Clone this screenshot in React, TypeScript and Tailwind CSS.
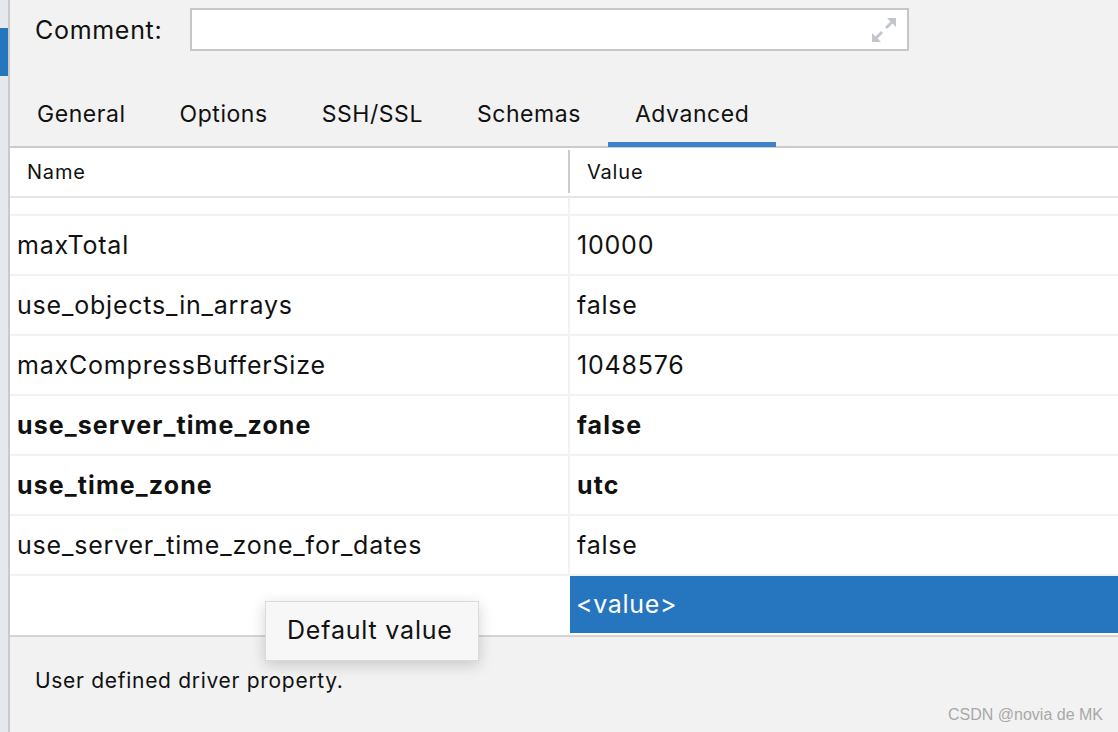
import React from "react";

const tabs = ["General", "Options", "SSH/SSL", "Schemas", "Advanced"];

const rows = [
  { name: "maxTotal", value: "10000" },
  { name: "use_objects_in_arrays", value: "false" },
  { name: "maxCompressBufferSize", value: "1048576" },
  { name: "use_server_time_zone", value: "false", bold: true },
  { name: "use_time_zone", value: "utc", bold: true },
  { name: "use_server_time_zone_for_dates", value: "false" },
];

const ExpandIcon = () => (
  <svg width="26" height="26" viewBox="0 0 26 26" fill="#c2c6ca">
    <path d="M25 1 L25 10 L21.5 6.5 L16 12 L14 10 L19.5 4.5 L16 1 Z" />
    <path d="M1 25 L1 16 L4.5 19.5 L10 14 L12 16 L6.5 21.5 L10 25 Z" />
  </svg>
);

export default function App() {
  return (
    <div
      className="relative flex w-[1118px] h-[732px] overflow-hidden bg-[#f2f2f2] text-[#111]"
      style={{ fontFamily: "Inter, 'Noto Sans', sans-serif" }}
    >
      <div className="w-[8px] bg-[#e5e9ee] shrink-0">
        <div className="mt-[28px] h-[48px] bg-[#2675bf]" />
      </div>
      <div className="w-[2px] bg-[#cacaca] shrink-0" />

      <div className="flex-1 flex flex-col">
        {/* comment */}
        <div className="h-[80px] flex items-start pt-[8px]">
          <div className="w-[180px] pl-[25px] h-[45px] flex items-center text-[25px] tracking-[0.7px]">Comment:</div>
          <div className="w-[719px] h-[43px] bg-white border-2 border-[#c6c6c6] flex items-center justify-end pr-[10px]">
            <ExpandIcon />
          </div>
        </div>

        {/* tabs */}
        <div className="h-[68px] flex border-b-2 border-[#cbcbcb]">
          {tabs.map((t) => (
            <div key={t} className="relative px-[27px] pt-[2px] flex items-center text-[23px] tracking-[0.55px]">
              {t}
              {t === "Advanced" && (
                <div className="absolute left-0 right-0 -bottom-[1px] h-[5px] bg-[#3d82c8]" />
              )}
            </div>
          ))}
        </div>

        {/* table */}
        <div className="bg-white flex flex-col">
          <div className="h-[50px] flex border-b-2 border-[#e6e6e6] text-[20px] tracking-[0.8px]">
            <div className="w-[558px] pl-[17px] flex items-center">Name</div>
            <div className="w-[2px] h-[43px] mt-[2px] bg-[#cccccc]" />
            <div className="flex-1 pl-[17px] flex items-center">Value</div>
          </div>
          <div className="h-[18px] flex border-b-2 border-[#f2f2f2]">
            <div className="w-[558px]" />
            <div className="w-[2px] bg-[#f2f2f2]" />
          </div>
          {rows.map((r) => (
            <div
              key={r.name}
              className={`h-[60px] flex border-b-2 border-[#f2f2f2] text-[25px] ${
                r.bold ? "font-bold tracking-[1.1px]" : "tracking-[0.8px]"
              }`}
            >
              <div className="w-[558px] pl-[7px] pt-[2px] flex items-center">{r.name}</div>
              <div className="w-[2px] bg-[#f2f2f2]" />
              <div className="flex-1 pl-[7px] pt-[2px] flex items-center">{r.value}</div>
            </div>
          ))}
          <div className="h-[61px] flex border-b-2 border-[#d4d4d4] text-[25px] tracking-[0.7px]">
            <div className="w-[560px]" />
            <div className="flex-1 h-[57px] bg-[#2675bf] text-white pl-[6px] flex items-center">
              &lt;value&gt;
            </div>
          </div>
        </div>

        {/* description */}
        <div className="flex-1 pl-[25px] pt-[28px] text-[21px] tracking-[0.7px]">
          User defined driver property.
        </div>
      </div>

      {/* popup */}
      <div className="absolute left-[265px] top-[601px] w-[214px] h-[60px] bg-[#f7f7f7] border border-[#dadada] shadow-[0_4px_14px_rgba(0,0,0,0.18)] flex items-center pl-[21px] text-[25px] tracking-[0.8px]">
        Default value
      </div>

      {/* watermark */}
      <div
        className="absolute right-[15px] bottom-[5px] text-[16px] text-[#a8a8a8]"
        style={{ fontFamily: "'Liberation Sans', Arial, sans-serif" }}
      >
        CSDN @novia de MK
      </div>
    </div>
  );
}
